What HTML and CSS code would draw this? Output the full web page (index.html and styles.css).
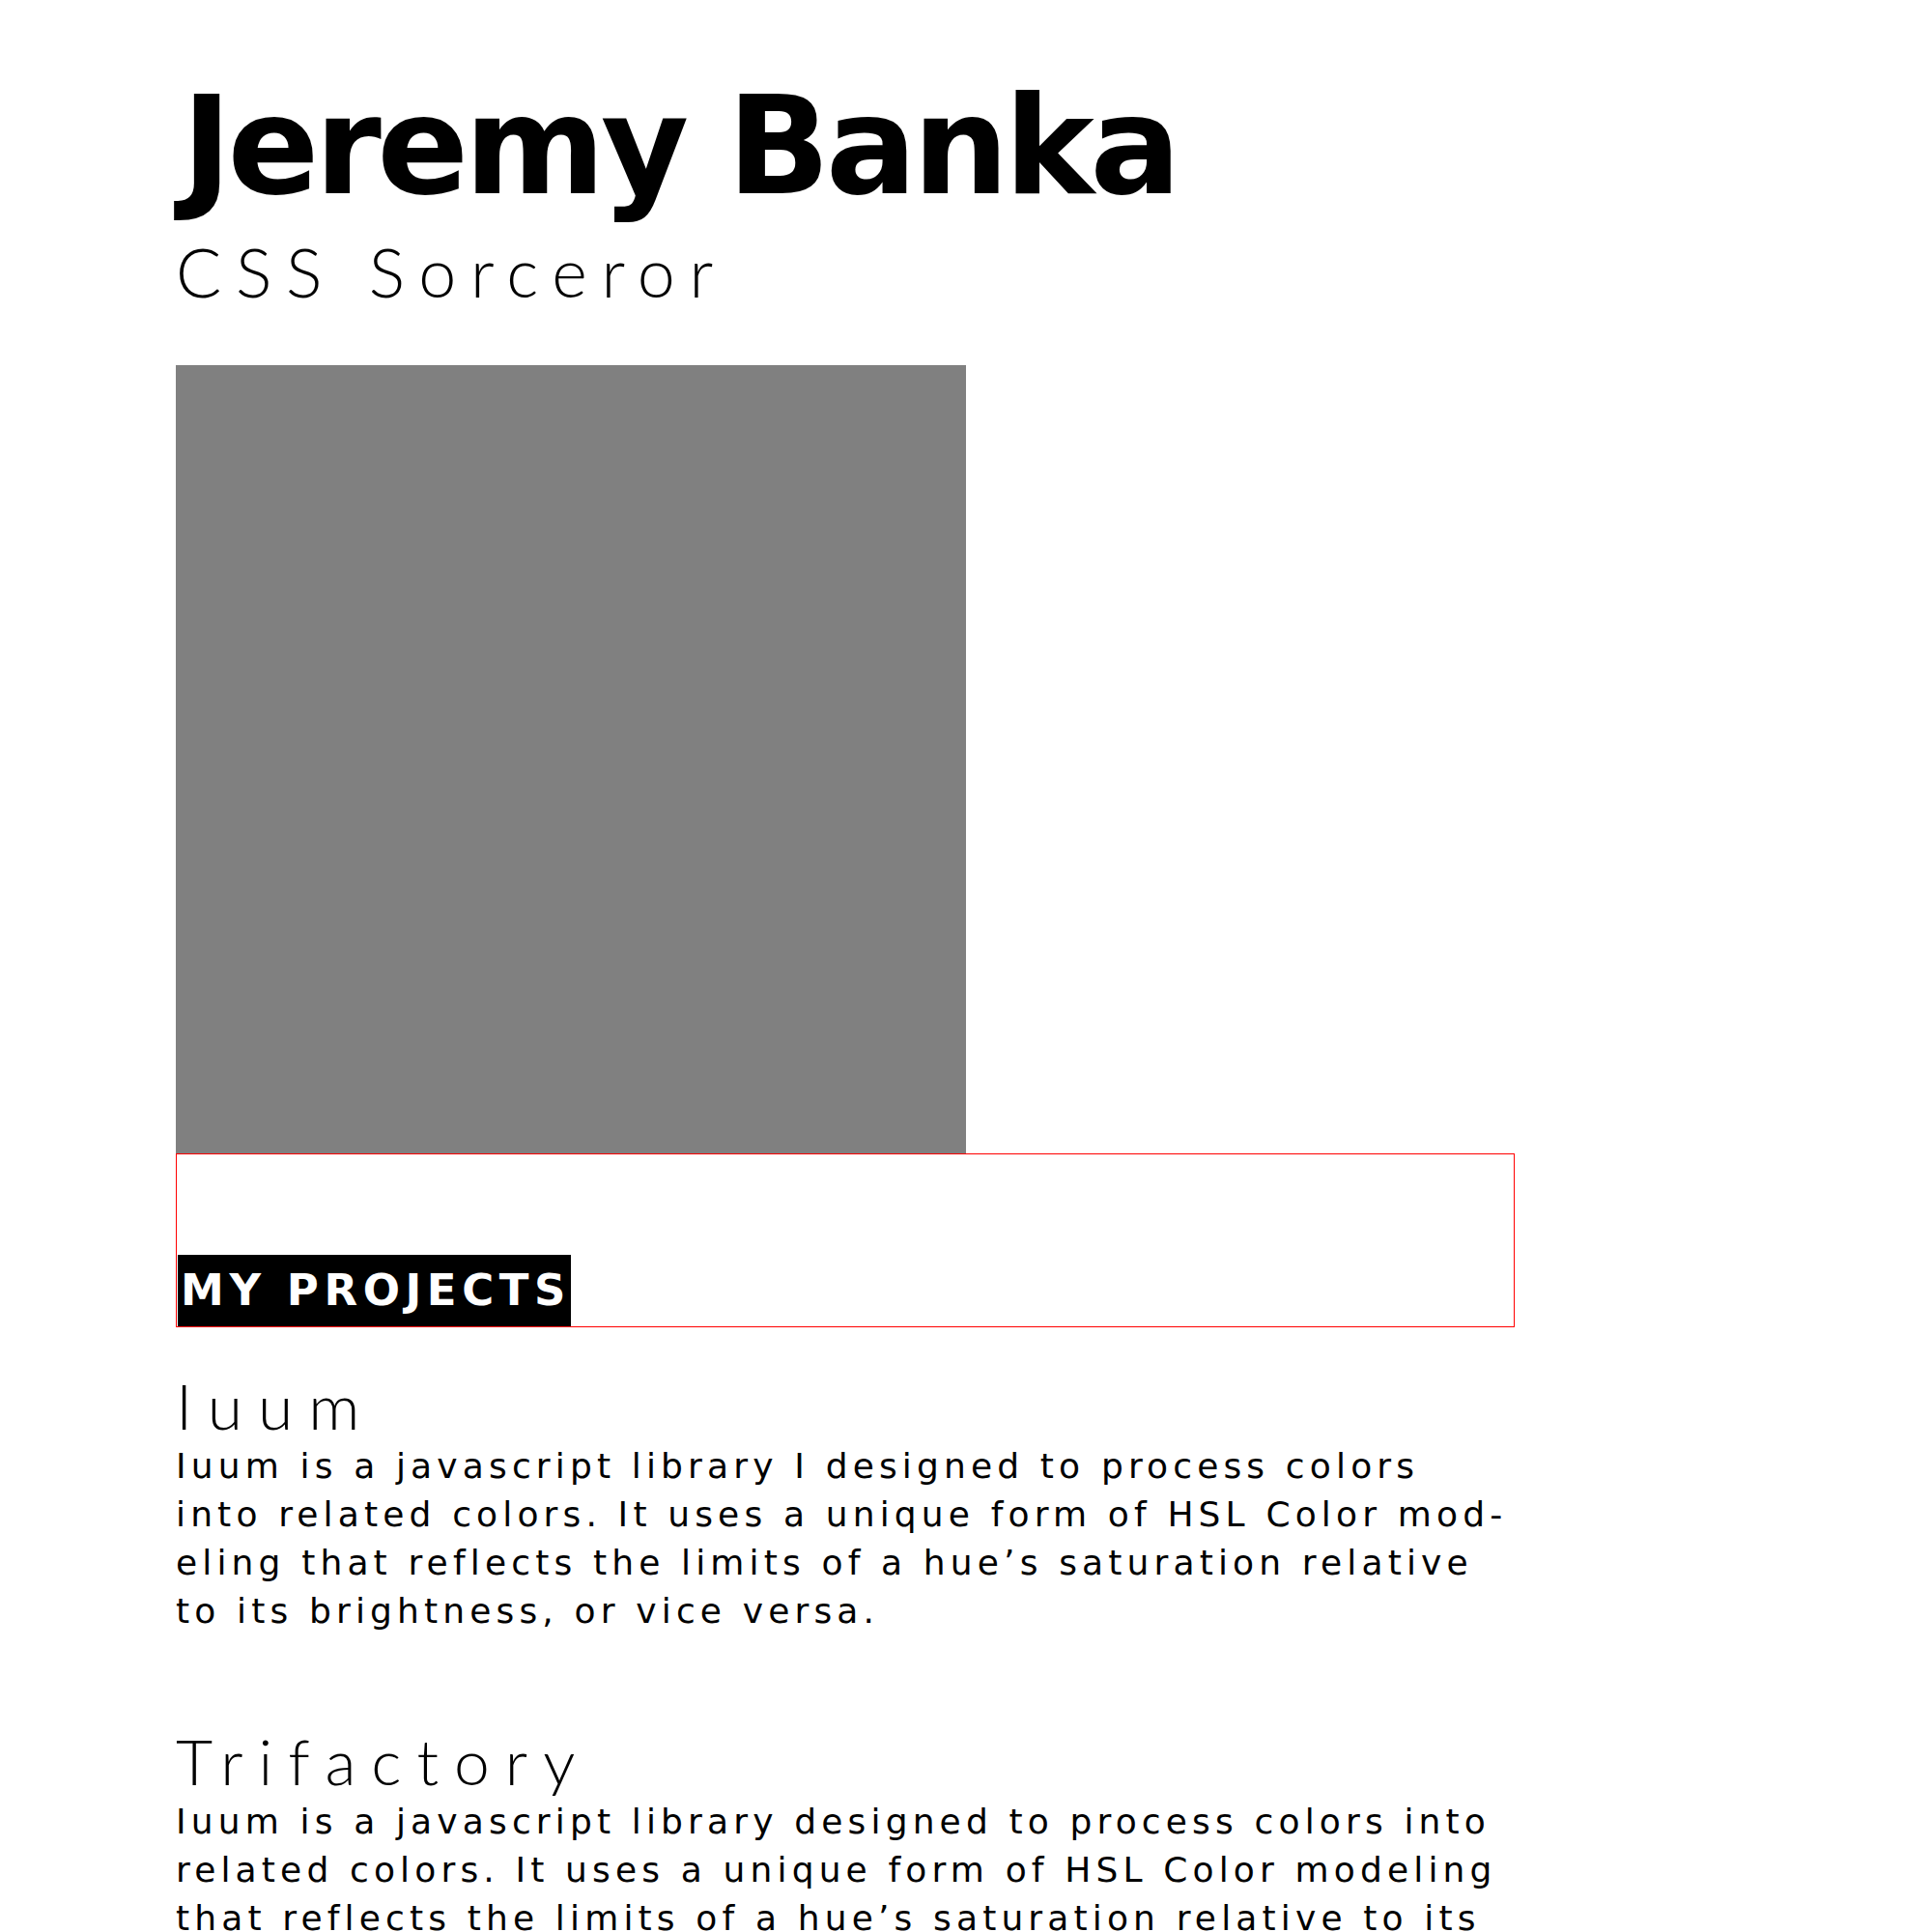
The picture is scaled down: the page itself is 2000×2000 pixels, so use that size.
FILE: index.html
```html
<!DOCTYPE html>
<html lang="en">
<head>
<meta charset="utf-8">
<title>Jeremy Banka</title>
<link rel="stylesheet" href="styles.css">
</head>
<body>
<main class="page">
  <header class="intro">
    <h1 class="name">Jeremy Banka</h1>
    <p class="role">CSS Sorceror</p>
  </header>
  <div class="photo"></div>
  <section class="projects">
    <div class="section-head">
      <h2 class="section-title">MY PROJECTS</h2>
    </div>
    <article class="project">
      <h3 class="project-name">Iuum</h3>
      <p class="project-desc">Iuum is a javascript library I designed to process colors into related colors. It uses a unique form of HSL Color mod&shy;eling that reflects the limits of a hue’s saturation relative to its brightness, or vice versa.</p>
    </article>
    <article class="project">
      <h3 class="project-name">Trifactory</h3>
      <p class="project-desc">Iuum is a javascript library designed to process colors into related colors. It uses a unique form of HSL Color modeling that reflects the limits of a hue’s saturation relative to its brightness, or vice versa.</p>
    </article>
  </section>
</main>
</body>
</html>
```
FILE: styles.css
```css
body {
  margin: 0;
  background: #fff;
  color: #000;
}
.page {
  width: 1386px;
  padding: 82px 0 0 182px;
}
.name {
  margin: 0 0 0 6px;
  font: 700 140px/140px "DejaVu Sans", sans-serif;
  letter-spacing: -4.6px;
}
.role {
  margin: 17px 0 0;
  font: 300 70px/84px "Lato", sans-serif;
  letter-spacing: 14.6px;
}
.photo {
  width: 818px;
  height: 816px;
  margin-top: 55px;
  background: #808080;
}
.section-head {
  box-sizing: border-box;
  height: 180px;
  border: 1px solid #f00;
  display: flex;
  align-items: flex-end;
}
.section-title {
  margin: 0 0 0 1px;
  padding-left: 3px;
  background: #000;
  color: #fff;
  font: 700 45px/74px "DejaVu Sans", sans-serif;
  letter-spacing: 5.6px;
}
.project-name {
  margin: 48px 0 5px;
  font: 300 66px/66px "Lato", sans-serif;
  letter-spacing: 16px;
}
.project-desc {
  margin: 0;
  font: 400 36px/50px "DejaVu Sans", sans-serif;
  letter-spacing: 5.15px;
}
.project + .project {
  margin-top: 97px;
}
```
